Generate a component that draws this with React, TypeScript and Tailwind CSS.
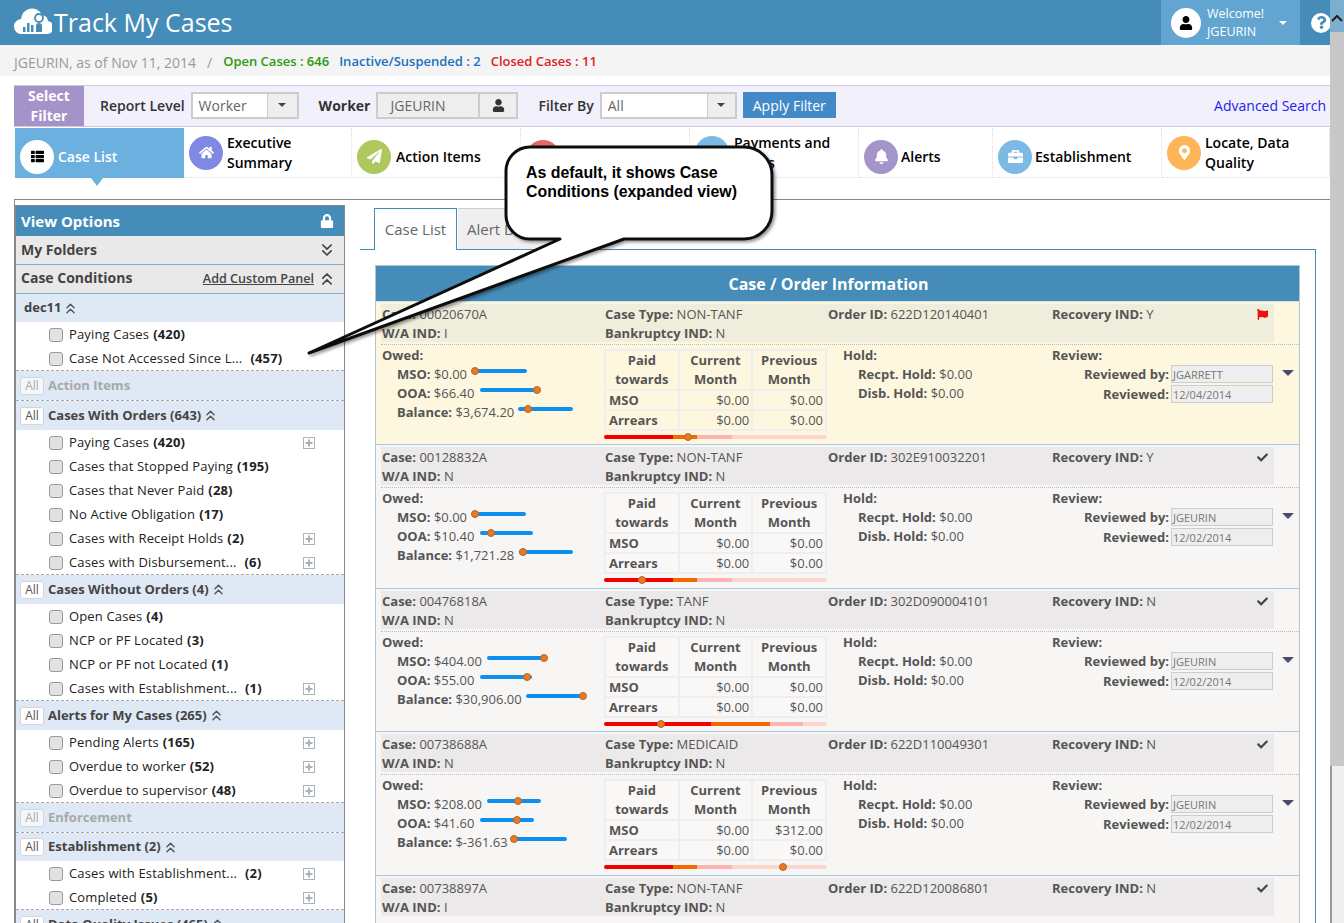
import { ChevronsDown, ChevronsUp } from "lucide-react";
import {
  FaBell,
  FaBriefcase,
  FaCheck,
  FaFlag,
  FaHome,
  FaLock,
  FaMapMarkerAlt,
  FaPaperPlane,
  FaQuestion,
  FaThList,
  FaUser,
} from "react-icons/fa";
import type { ReactNode } from "react";

type Item = { label: string; count: string; plus?: boolean; gap?: boolean };
type Group = { title: string; all?: boolean; muted?: boolean; open?: boolean; short?: boolean; items?: Item[] };

const groups: Group[] = [
  {
    title: "dec11",
    open: true,
    short: true,
    items: [
      { label: "Paying Cases", count: "(420)" },
      { label: "Case Not Accessed Since L...", count: "(457)", gap: true },
    ],
  },
  { title: "Action Items", all: true, muted: true },
  {
    title: "Cases With Orders (643)",
    all: true,
    open: true,
    items: [
      { label: "Paying Cases", count: "(420)", plus: true },
      { label: "Cases that Stopped Paying", count: "(195)" },
      { label: "Cases that Never Paid", count: "(28)" },
      { label: "No Active Obligation", count: "(17)" },
      { label: "Cases with Receipt Holds", count: "(2)", plus: true },
      { label: "Cases with Disbursement...", count: "(6)", plus: true, gap: true },
    ],
  },
  {
    title: "Cases Without Orders (4)",
    all: true,
    open: true,
    items: [
      { label: "Open Cases", count: "(4)" },
      { label: "NCP or PF Located", count: "(3)" },
      { label: "NCP or PF not Located", count: "(1)" },
      { label: "Cases with Establishment...", count: "(1)", plus: true, gap: true },
    ],
  },
  {
    title: "Alerts for My Cases (265)",
    all: true,
    open: true,
    items: [
      { label: "Pending Alerts", count: "(165)", plus: true },
      { label: "Overdue to worker", count: "(52)", plus: true },
      { label: "Overdue to supervisor", count: "(48)", plus: true },
    ],
  },
  { title: "Enforcement", all: true, muted: true },
  {
    title: "Establishment (2)",
    all: true,
    open: true,
    short: true,
    items: [
      { label: "Cases with Establishment...", count: "(2)", plus: true, gap: true },
      { label: "Completed", count: "(5)", plus: true },
    ],
  },
  { title: "Data Quality Issues (465)", all: true, open: true },
];

const navItems = [
  { label: "Executive Summary", icon: <FaHome />, bg: "bg-[#7f88e3]", w: "w-[168px]", gap: "gap-[4px]", two: true },
  { label: "Action Items", icon: <FaPaperPlane />, bg: "bg-[#aec75f]", w: "w-[169px]", gap: "gap-[5px]" },
  { label: "Compliance", icon: <FaCheck />, bg: "bg-[#e06a6a]", w: "w-[169px]", gap: "gap-[4px]" },
  { label: "Payments and Funds", icon: <FaBriefcase />, bg: "bg-[#7cb9e4]", w: "w-[169px]", gap: "gap-[5px]", two: true },
  { label: "Alerts", icon: <FaBell />, bg: "bg-[#a594c9]", w: "w-[134px]", gap: "gap-[3px]" },
  { label: "Establishment", icon: <FaBriefcase />, bg: "bg-[#7cb9e4]", w: "w-[169px]", gap: "gap-[3px]" },
  { label: "Locate, Data Quality", icon: <FaMapMarkerAlt />, bg: "bg-[#fdb558]", w: "w-[168px]", gap: "gap-[4px]", two: true },
];

type Owed = { label: string; value: string; ml: string; w: string; thumb: number };
type CaseData = {
  id: string;
  type: string;
  wa: string;
  order: string;
  rec: string;
  flag?: boolean;
  reviewer?: string;
  date?: string;
  owed?: Owed[];
  prev?: string;
  redTo?: number;
  orangeTo?: number;
  pinkTo?: number;
  mark?: number;
};

const cases: CaseData[] = [
  {
    id: "00020670A",
    type: "NON-TANF",
    wa: "I",
    order: "622D120140401",
    rec: "Y",
    flag: true,
    reviewer: "JGARRETT",
    date: "12/04/2014",
    owed: [
      { label: "MSO", value: "$0.00", ml: "ml-[10px]", w: "w-[50px]", thumb: -4 },
      { label: "OOA", value: "$66.40", ml: "ml-[6px]", w: "w-[57px]", thumb: 100 },
      { label: "Balance", value: "$3,674.20", ml: "ml-[4px]", w: "w-[55px]", thumb: 18 },
    ],
    prev: "$0.00",
    redTo: 69,
    orangeTo: 93,
    pinkTo: 128,
    mark: 84,
  },
  {
    id: "00128832A",
    type: "NON-TANF",
    wa: "N",
    order: "302E910032201",
    rec: "Y",
    reviewer: "JGEURIN",
    date: "12/02/2014",
    owed: [
      { label: "MSO", value: "$0.00", ml: "ml-[10px]", w: "w-[49px]", thumb: -4 },
      { label: "OOA", value: "$10.40", ml: "ml-[6px]", w: "w-[53px]", thumb: 20 },
      { label: "Balance", value: "$1,721.28", ml: "ml-[5px]", w: "w-[54px]", thumb: 7 },
    ],
    prev: "$0.00",
    redTo: 69,
    orangeTo: 93,
    pinkTo: 128,
    mark: 38,
  },
  {
    id: "00476818A",
    type: "TANF",
    wa: "N",
    order: "302D090004101",
    rec: "N",
    reviewer: "JGEURIN",
    date: "12/02/2014",
    owed: [
      { label: "MSO", value: "$404.00", ml: "ml-[5px]", w: "w-[57px]", thumb: 100 },
      { label: "OOA", value: "$55.00", ml: "ml-[6px]", w: "w-[52px]", thumb: 90 },
      { label: "Balance", value: "$30,906.00", ml: "ml-[4px]", w: "w-[57px]", thumb: 100 },
    ],
    prev: "$0.00",
    redTo: 107,
    orangeTo: 166,
    pinkTo: 199,
    mark: 57,
  },
  {
    id: "00738688A",
    type: "MEDICAID",
    wa: "N",
    order: "622D110049301",
    rec: "N",
    reviewer: "JGEURIN",
    date: "12/02/2014",
    owed: [
      { label: "MSO", value: "$208.00", ml: "ml-[5px]", w: "w-[54px]", thumb: 58 },
      { label: "OOA", value: "$41.60", ml: "ml-[6px]", w: "w-[54px]", thumb: 67 },
      { label: "Balance", value: "$-361.63", ml: "ml-[4px]", w: "w-[55px]", thumb: 5 },
    ],
    prev: "$312.00",
    redTo: 69,
    orangeTo: 93,
    pinkTo: 128,
    mark: 179,
  },
  { id: "00738897A", type: "NON-TANF", wa: "I", order: "622D120086801", rec: "N" },
];

function Logo() {
  return (
    <svg viewBox="0 0 38 34" className="-mt-[6px] h-[34px] w-[38px]" aria-hidden>
      <path
        d="M8 31a7.500 7.500 0 0 1-1-15 11 11 0 0 1 21-4 7 7 0 0 1 6 6 6.500 6.500 0 0 1-2 13z"
        fill="#fff"
      />
      <rect x="9" y="24" width="2.500" height="5" fill="#458cb8" />
      <rect x="13" y="20" width="2.500" height="9" fill="#458cb8" />
      <rect x="17" y="22" width="2.500" height="7" fill="#458cb8" />
      <circle cx="25" cy="15" r="4" fill="none" stroke="#458cb8" strokeWidth="1.800" />
      <path d="M22 29v-6a3 3 0 0 1 6 0v6z" fill="#458cb8" />
    </svg>
  );
}

function PlusBox() {
  return (
    <svg viewBox="0 0 12 12" className="h-[12px] w-[12px] shrink-0" aria-hidden>
      <rect x="0.500" y="0.500" width="11" height="11" fill="#fff" stroke="#aab2ba" />
      <path d="M6 2.500v7M2.500 6h7" stroke="#aab2ba" strokeWidth="2" />
    </svg>
  );
}

function Caret({ className }: { className: string }) {
  return (
    <span
      className={`h-0 w-0 border-x-[4px] border-t-[4px] border-x-transparent ${className}`}
      aria-hidden
    />
  );
}

function SidebarGroup({ group }: { group: Group }) {
  return (
    <div className="border-b border-dashed border-[#aaa] last:border-b-0">
      <div className={`flex items-center bg-[#dfe8f5] pl-[4px] ${group.short ? "h-[28px]" : "h-[29px]"}`}>
        {group.all ? (
          <span
            className={`mr-[4px] flex h-[18px] w-[24px] items-center justify-center rounded-[3px] border border-[#d5d5d5] text-[12px] ${group.muted ? "bg-[#f3f6fb] text-[#aaa]" : "bg-white text-[#555]"}`}
          >
            All
          </span>
        ) : (
          <span className="w-[4px]" />
        )}
        <span className={`text-[13px] font-bold ${group.muted ? "text-[#a5a8ac]" : "text-[#444]"}`}>
          {group.title}
        </span>
        {group.open && <ChevronsUp size={17} className="ml-[1px] text-[#555]" />}
      </div>
      {group.items && (
        <div>
          {group.items.map((item) => (
            <div key={item.label} className="flex h-[24px] items-center pl-[33px] pr-[29px] pt-px">
              <span className="mr-[6px] h-[14px] w-[14px] shrink-0 rounded-[3px] border border-[#999] bg-[#e2e2e2]" />
              <span className="whitespace-nowrap text-[13px] tracking-[0.15px] text-[#222]">{item.label}</span>
              <span className={`text-[13px] font-bold tracking-[0.15px] text-[#222] ${item.gap ? "ml-[8px]" : "ml-[4px]"}`}>
                {item.count}
              </span>
              {item.plus && (
                <span className="ml-auto">
                  <PlusBox />
                </span>
              )}
            </div>
          ))}
        </div>
      )}
    </div>
  );
}

function Sidebar() {
  return (
    <aside className="mt-[5px] w-[330px] shrink-0 self-start border-x border-t border-[#888]">
      <div className="flex h-[30px] items-center justify-between bg-[#458cb8] pl-[5px] pr-[10px] text-white">
        <span className="text-[15px] font-bold">View Options</span>
        <FaLock size={14} />
      </div>
      <div className="flex h-[29px] items-center justify-between border-b border-[#7db0d8] bg-[#e9e9e9] pb-[2px] pl-[5px] pr-[7px]">
        <span className="text-[14px] font-bold text-[#444]">My Folders</span>
        <ChevronsDown size={20} className="mt-[2px] text-[#444]" />
      </div>
      <div className="flex h-[29px] items-center justify-between border-b border-[#7db0d8] bg-[#e9e9e9] pb-[3px] pl-[5px] pr-[7px]">
        <span className="text-[14px] font-bold text-[#444]">Case Conditions</span>
        <span className="flex items-center gap-[3px]">
          <span className="mt-[3px] text-[12.600px] font-semibold text-[#444] underline">Add Custom Panel</span>
          <ChevronsUp size={20} className="mt-[3px] text-[#444]" />
        </span>
      </div>
      {groups.map((g) => (
        <SidebarGroup key={g.title} group={g} />
      ))}
    </aside>
  );
}

function Kv({ k, v, className = "" }: { k: string; v: string; className?: string }) {
  return (
    <div className={`h-[19px] whitespace-nowrap ${className}`}>
      <b className="font-bold">{k}:</b> {v}
    </div>
  );
}

function Slider({ owed }: { owed: Owed }) {
  return (
    <span className={`relative -top-[5px] inline-block h-[4px] rounded-full bg-[#0d8fee] align-middle ${owed.ml} ${owed.w}`}>
      <span
        className="absolute -top-[2px] -ml-[4px] h-[8px] w-[8px] rounded-full border border-[#a96a30] bg-[#ee7722]"
        style={{ left: `${owed.thumb}%` }}
      />
    </span>
  );
}

function CaseRow({ c, first, odd }: { c: CaseData; first: boolean; odd: boolean }) {
  const band = first ? "bg-[#efeddb]" : "bg-[#ebe9ea]";
  const rowBg = first ? "bg-[#fdf7df]" : "bg-[#f7f6f5]";
  const cell = first ? "border-[#eeeeee] bg-[#fdf7df]" : "border-[#eeeeee] bg-[#f9f8f7]";
  return (
    <div
      className={`border-b border-[#a8c8e4] pl-[5px] pt-[2px] text-[13px] leading-[19px] text-[#555] last:border-b-0 ${rowBg} ${odd ? "h-[144px]" : "h-[143px]"}`}
    >
      <div className={`flex h-[38px] w-[893px] pt-px ${band}`}>
        <div className="w-[223px] pl-px">
          <Kv k="Case" v={c.id} />
          <Kv k="W/A IND" v={c.wa} />
        </div>
        <div className="w-[223px] pl-px">
          <Kv k="Case Type" v={c.type} />
          <Kv k="Bankruptcy IND" v="N" />
        </div>
        <div className="w-[224px] pl-px">
          <Kv k="Order ID" v={c.order} />
        </div>
        <div className="flex flex-1 justify-between pl-px pr-[6px]">
          <Kv k="Recovery IND" v={c.rec} />
          {c.flag ? (
            <FaFlag size={11} className="mt-[4px] text-[#f01010]" />
          ) : (
            <FaCheck size={11} className="mt-[4px] text-[#444]" />
          )}
        </div>
      </div>
      {c.owed && (
        <div className="mt-[2px] flex border-t border-dotted border-[#bbb]">
          <div className="w-[223px] pl-px pt-px">
            <div className="h-[19px] font-bold">Owed:</div>
            {c.owed.map((o) => (
              <div key={o.label} className="h-[19px] whitespace-nowrap pl-[15px]">
                <b className="font-bold">{o.label}:</b> {o.value}
                <Slider owed={o} />
              </div>
            ))}
          </div>
          <div className="w-[223px] pt-[4px]">
            <table className="w-[223px] table-fixed border-collapse text-[13px] leading-[19px]">
              <tbody>
                <tr className="text-center font-bold">
                  <td className={`border-2 ${cell}`}>
                    Paid
                    <br />
                    towards
                  </td>
                  <td className={`border-2 ${cell}`}>
                    Current
                    <br />
                    Month
                  </td>
                  <td className={`border-2 ${cell}`}>
                    Previous
                    <br />
                    Month
                  </td>
                </tr>
                <tr className="leading-[18px]">
                  <td className={`border-2 pl-[3px] font-bold ${cell}`}>MSO</td>
                  <td className={`border-2 pr-[2px] text-right ${cell}`}>$0.00</td>
                  <td className={`border-2 pr-[2px] text-right ${cell}`}>{c.prev}</td>
                </tr>
                <tr className="leading-[18px]">
                  <td className={`border-2 pl-[3px] font-bold ${cell}`}>Arrears</td>
                  <td className={`border-2 pr-[2px] text-right ${cell}`}>$0.00</td>
                  <td className={`border-2 pr-[2px] text-right ${cell}`}>$0.00</td>
                </tr>
              </tbody>
            </table>
            <div className="relative mt-[4px] flex h-[4px] w-[223px] rounded-full bg-[#fcd6cf]">
              <span className="rounded-l-full bg-[#f20000]" style={{ width: c.redTo }} />
              <span className="bg-[#f56a00]" style={{ width: (c.orangeTo ?? 0) - (c.redTo ?? 0) }} />
              <span className="bg-[#fbb3b3]" style={{ width: (c.pinkTo ?? 0) - (c.orangeTo ?? 0) }} />
              <span
                className="absolute -top-[2px] -ml-[4px] h-[8px] w-[8px] rounded-full border border-[#a96a30] bg-[#ee7722]"
                style={{ left: c.mark }}
              />
            </div>
          </div>
          <div className="w-[224px] pl-[16px] pt-px">
            <div className="h-[19px] font-bold">Hold:</div>
            <Kv k="Recpt. Hold" v="$0.00" className="pl-[15px]" />
            <Kv k="Disb. Hold" v="$0.00" className="pl-[15px]" />
          </div>
          <div className="flex-1 pl-px">
            <div className="h-[19px] pt-px font-bold">Review:</div>
            <div className="flex h-[20px] items-center justify-end gap-[2px]">
              <b className="font-bold">Reviewed by:</b>
              <span className="flex h-[18px] w-[102px] items-center border border-[#ccc] bg-[#eee] pl-px text-[11px] text-[#777]">
                {c.reviewer}
              </span>
            </div>
            <div className="flex h-[20px] items-center justify-end gap-[2px]">
              <b className="font-bold">Reviewed:</b>
              <span className="flex h-[18px] w-[102px] items-center border border-[#ccc] bg-[#eee] pl-px text-[11px] text-[#777]">
                {c.date}
              </span>
            </div>
          </div>
          <div className="w-[26px] pl-[9px] pt-[25px]">
            <span className="block h-0 w-0 border-x-[6px] border-t-[6px] border-x-transparent border-t-[#4a4a6a]" />
          </div>
        </div>
      )}
    </div>
  );
}

function NavCell({ label, icon, bg, w, gap, two }: { label: string; icon: ReactNode; bg: string; w: string; gap: string; two?: boolean }) {
  return (
    <div className={`flex h-[50px] items-center border-r border-b border-dotted border-[#ddd] pl-[5px] ${w} ${gap} ${two ? "" : "pt-[8px]"}`}>
      <span className={`flex h-[34px] w-[34px] shrink-0 items-center justify-center rounded-full text-[15px] text-white ${bg}`}>
        {icon}
      </span>
      <span className="text-[14px] font-semibold leading-[20px] text-black">{label}</span>
    </div>
  );
}

function Callout() {
  return (
    <div className="absolute left-[300px] top-[140px] h-[225px] w-[480px]">
      <svg viewBox="0 0 480 225" className="h-full w-full" aria-hidden>
        <defs>
          <filter id="sh" x="-10%" y="-10%" width="120%" height="120%">
            <feDropShadow dx="2" dy="2" stdDeviation="1.500" floodColor="#000" floodOpacity="0.4" />
          </filter>
        </defs>
        <path
          d="M230 7h214a28 28 0 0 1 28 28v36a28 28 0 0 1-28 28H324L9 213 260 99h-30a24 24 0 0 1-24-24V31a24 24 0 0 1 24-24z"
          fill="#fff"
          stroke="#111"
          strokeWidth="3"
          strokeLinejoin="round"
          filter="url(#sh)"
        />
      </svg>
      <div className="absolute left-[226px] top-[23px] w-[225px] font-['Liberation_Sans',Arial,sans-serif] text-[15.900px] font-bold leading-[19px] text-black">
        As default, it shows Case Conditions (expanded view)
      </div>
    </div>
  );
}

export default function App() {
  return (
    <div className="relative flex h-[923px] overflow-hidden bg-white font-['Open_Sans',sans-serif]">
      <div className="w-[1330px] shrink-0">
        <header className="flex h-[45px] items-center bg-[#458cb8] pl-[14px] text-white">
          <Logo />
          <span className="ml-[2px] text-[25px] leading-none">Track My Cases</span>
          <div className="ml-auto flex h-[45px] w-[139px] items-center bg-[#62a5d0] pl-[10px]">
            <span className="flex h-[30px] w-[30px] items-center justify-center rounded-full bg-white text-black">
              <FaUser size={14} />
            </span>
            <span className="ml-[6px] text-[12.500px] leading-[18px]">
              Welcome!
              <br />
              JGEURIN
            </span>
            <Caret className="ml-[15px] border-t-white" />
          </div>
          <span className="-mr-px ml-[11px] flex h-[20px] w-[20px] shrink-0 items-center justify-center rounded-full bg-white text-[#458cb8]">
            <FaQuestion size={13} />
          </span>
        </header>

        <div className="flex h-[31px] items-center gap-[10px] bg-[#f4f4f4] pl-[14px] pt-[3px] text-[13px] font-semibold">
          <span className="text-[14px] font-normal text-[#999]">JGEURIN, as of Nov 11, 2014</span>
          <span className="mx-[1px] text-[14px] font-normal text-[#999]">/</span>
          <span className="text-[#2a9a10]">Open Cases : 646</span>
          <span className="text-[#1a70c0]">Inactive/Suspended : 2</span>
          <span className="text-[#dd2222]">Closed Cases : 11</span>
        </div>

        <div className="ml-[14px] mt-[9px] flex h-[42px] items-center border-y border-[#cfc8e3] bg-[#f2f0fb] pb-[2px] text-[14px]">
          <div className="-mb-[2px] flex w-[70px] items-center justify-center self-stretch bg-[#a592c8] text-center font-bold leading-[20px] text-white">
            Select Filter
          </div>
          <span className="ml-[16px] font-semibold text-[#333]">Report Level</span>
          <div className="ml-[6px] flex h-[27px] w-[108px] border-2 border-[#ccc] bg-white">
            <span className="flex-1 pl-[6px] leading-[24px] text-[#666]">Worker</span>
            <span className="flex w-[30px] items-center justify-center border-l border-[#ccc] bg-[#eee]">
              <Caret className="border-t-[#444]" />
            </span>
          </div>
          <span className="ml-[20px] font-bold text-[#333]">Worker</span>
          <div className="ml-[6px] flex h-[27px] w-[142px] border-2 border-[#ccc] bg-[#eee]">
            <span className="flex-1 pl-[12px] leading-[24px] text-[#666]">JGEURIN</span>
            <span className="flex w-[38px] items-center justify-center border-l-2 border-[#ccc] text-[#333]">
              <FaUser size={13} />
            </span>
          </div>
          <span className="ml-[20px] font-semibold text-[#333]">Filter By</span>
          <div className="ml-[6px] flex h-[27px] w-[137px] border-2 border-[#ccc] bg-white">
            <span className="flex-1 pl-[6px] leading-[24px] text-[#666]">All</span>
            <span className="flex w-[28px] items-center justify-center border-l border-[#ccc] bg-[#eee]">
              <Caret className="border-t-[#444]" />
            </span>
          </div>
          <span className="ml-[6px] flex h-[26px] w-[93px] items-center justify-center bg-[#4289c8] text-white">
            Apply Filter
          </span>
          <span className="ml-auto pr-[4px] text-[#2222ee]">Advanced Search</span>
        </div>

        <nav className="ml-[15px] mt-px flex">
          <div className="relative flex h-[50px] w-[169px] items-center bg-[#6cb0e0] pl-[5px] pt-[7px]">
            <span className="flex h-[34px] w-[34px] items-center justify-center rounded-full bg-white text-[13px] text-black">
              <FaThList />
            </span>
            <span className="ml-[4px] text-[14px] font-semibold text-white">Case List</span>
            <span className="absolute left-[76px] top-[50px] h-0 w-0 border-x-[6px] border-t-[8px] border-x-transparent border-t-[#6cb0e0]" />
          </div>
          {navItems.map((n) => (
            <NavCell key={n.label} {...n} />
          ))}
        </nav>

        <div className="ml-[14px] mt-[21px] flex h-[724px] border-l border-t border-[#888]">
          <Sidebar />
          <main className="min-w-0 flex-1 pl-[15px] pt-[8px]">
            <div className="flex h-[42px] w-[956px] border-b border-[#458cb8] pl-[14px]">
              <div className="h-[42px] w-[83px] border-x border-t border-[#458cb8] bg-white pt-[9px] text-center text-[15px] text-[#666]">
                Case List
              </div>
              <div className="ml-px h-[41px] w-[110px] border-r border-t border-[#ccc] bg-[#f0eeee] pl-[9px] pt-[9px] text-[15px] text-[#666]">
                Alert Details
              </div>
            </div>
            <div className="h-[700px] w-[956px] border-r border-[#458cb8] pl-[15px] pt-[15px]">
              <div className="w-[925px] border border-[#b5c4d0]">
                <div className="flex h-[36px] items-center justify-center border-b border-[#cfe0ec] bg-[#458cb8] pr-[18px] text-[16px] font-bold text-white">
                  Case / Order Information
                </div>
                {cases.map((c, i) => (
                  <CaseRow key={c.id} c={c} first={i === 0} odd={i % 2 === 1} />
                ))}
              </div>
            </div>
          </main>
        </div>
      </div>

      <div className="relative flex w-[14px] shrink-0 flex-col">
        <div className="flex h-[32px] items-start justify-center bg-[#458cb8]/70 pt-[14px] text-[#222]">
          <svg viewBox="0 0 12 8" className="h-[8px] w-[12px]" aria-hidden>
            <path d="M1 7l5-5 5 5" fill="none" stroke="#222" strokeWidth="2" />
          </svg>
        </div>
        <div className="h-[734px] bg-[#c8c8c8]" />
        <div className="flex-1 border-l-2 border-[#999] bg-[#efefef]" />
      </div>

      <Callout />
    </div>
  );
}
